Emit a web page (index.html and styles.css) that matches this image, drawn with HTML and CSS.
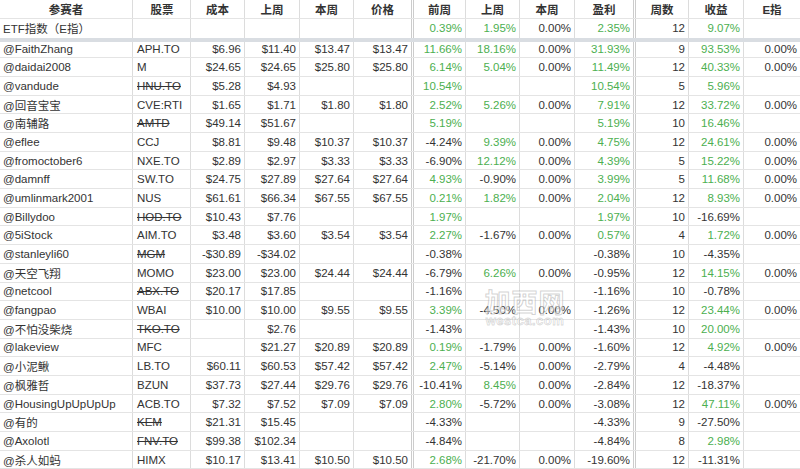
FILE: index.html
```html
<!DOCTYPE html>
<html lang="zh">
<head>
<meta charset="utf-8">
<title>股票比赛</title>
<link rel="stylesheet" href="styles.css">
</head>
<body>
<div class="sheet">
  <div class="row head">
    <span class="c">参赛者</span><span class="c">股票</span><span class="c">成本</span><span class="c">上周</span><span class="c">本周</span><span class="c">价格</span><span class="c">前周</span><span class="c">上周</span><span class="c">本周</span><span class="c">盈利</span><span class="c">周数</span><span class="c">收益</span><span class="c">E指</span>
  </div>
  <div class="row etf">
    <span class="c">ETF指数（E指）</span><span class="c"></span><span class="c"></span><span class="c"></span><span class="c"></span><span class="c"></span><span class="c g">0.39%</span><span class="c g">1.95%</span><span class="c">0.00%</span><span class="c g">2.35%</span><span class="c">12</span><span class="c g">9.07%</span><span class="c"></span>
  </div>
  <div class="row first">
    <span class="c">@FaithZhang</span><span class="c">APH.TO</span><span class="c">$6.96</span><span class="c">$11.40</span><span class="c">$13.47</span><span class="c">$13.47</span><span class="c g">11.66%</span><span class="c g">18.16%</span><span class="c">0.00%</span><span class="c g">31.93%</span><span class="c">9</span><span class="c g">93.53%</span><span class="c">0.00%</span>
  </div>
  <div class="row">
    <span class="c">@daidai2008</span><span class="c">M</span><span class="c">$24.65</span><span class="c">$24.65</span><span class="c">$25.80</span><span class="c">$25.80</span><span class="c g">6.14%</span><span class="c g">5.04%</span><span class="c">0.00%</span><span class="c g">11.49%</span><span class="c">12</span><span class="c g">40.33%</span><span class="c">0.00%</span>
  </div>
  <div class="row">
    <span class="c">@vandude</span><span class="c"><s>HNU.TO</s></span><span class="c">$5.28</span><span class="c">$4.93</span><span class="c"></span><span class="c"></span><span class="c g">10.54%</span><span class="c"></span><span class="c"></span><span class="c g">10.54%</span><span class="c">5</span><span class="c g">5.96%</span><span class="c"></span>
  </div>
  <div class="row">
    <span class="c">@回音宝宝</span><span class="c">CVE:RTI</span><span class="c">$1.65</span><span class="c">$1.71</span><span class="c">$1.80</span><span class="c">$1.80</span><span class="c g">2.52%</span><span class="c g">5.26%</span><span class="c">0.00%</span><span class="c g">7.91%</span><span class="c">12</span><span class="c g">33.72%</span><span class="c">0.00%</span>
  </div>
  <div class="row">
    <span class="c">@南辅路</span><span class="c"><s>AMTD</s></span><span class="c">$49.14</span><span class="c">$51.67</span><span class="c"></span><span class="c"></span><span class="c g">5.19%</span><span class="c"></span><span class="c"></span><span class="c g">5.19%</span><span class="c">10</span><span class="c g">16.46%</span><span class="c"></span>
  </div>
  <div class="row">
    <span class="c">@eflee</span><span class="c">CCJ</span><span class="c">$8.81</span><span class="c">$9.48</span><span class="c">$10.37</span><span class="c">$10.37</span><span class="c">-4.24%</span><span class="c g">9.39%</span><span class="c">0.00%</span><span class="c g">4.75%</span><span class="c">12</span><span class="c g">24.61%</span><span class="c">0.00%</span>
  </div>
  <div class="row">
    <span class="c">@fromoctober6</span><span class="c">NXE.TO</span><span class="c">$2.89</span><span class="c">$2.97</span><span class="c">$3.33</span><span class="c">$3.33</span><span class="c">-6.90%</span><span class="c g">12.12%</span><span class="c">0.00%</span><span class="c g">4.39%</span><span class="c">5</span><span class="c g">15.22%</span><span class="c">0.00%</span>
  </div>
  <div class="row">
    <span class="c">@damnff</span><span class="c">SW.TO</span><span class="c">$24.75</span><span class="c">$27.89</span><span class="c">$27.64</span><span class="c">$27.64</span><span class="c g">4.93%</span><span class="c">-0.90%</span><span class="c">0.00%</span><span class="c g">3.99%</span><span class="c">5</span><span class="c g">11.68%</span><span class="c">0.00%</span>
  </div>
  <div class="row">
    <span class="c">@umlinmark2001</span><span class="c">NUS</span><span class="c">$61.61</span><span class="c">$66.34</span><span class="c">$67.55</span><span class="c">$67.55</span><span class="c g">0.21%</span><span class="c g">1.82%</span><span class="c">0.00%</span><span class="c g">2.04%</span><span class="c">12</span><span class="c g">8.93%</span><span class="c">0.00%</span>
  </div>
  <div class="row">
    <span class="c">@Billydoo</span><span class="c"><s>HOD.TO</s></span><span class="c">$10.43</span><span class="c">$7.76</span><span class="c"></span><span class="c"></span><span class="c g">1.97%</span><span class="c"></span><span class="c"></span><span class="c g">1.97%</span><span class="c">10</span><span class="c">-16.69%</span><span class="c"></span>
  </div>
  <div class="row">
    <span class="c">@5iStock</span><span class="c">AIM.TO</span><span class="c">$3.48</span><span class="c">$3.60</span><span class="c">$3.54</span><span class="c">$3.54</span><span class="c g">2.27%</span><span class="c">-1.67%</span><span class="c">0.00%</span><span class="c g">0.57%</span><span class="c">4</span><span class="c g">1.72%</span><span class="c">0.00%</span>
  </div>
  <div class="row">
    <span class="c">@stanleyli60</span><span class="c"><s>MGM</s></span><span class="c">-$30.89</span><span class="c">-$34.02</span><span class="c"></span><span class="c"></span><span class="c">-0.38%</span><span class="c"></span><span class="c"></span><span class="c">-0.38%</span><span class="c">10</span><span class="c">-4.35%</span><span class="c"></span>
  </div>
  <div class="row">
    <span class="c">@天空飞翔</span><span class="c">MOMO</span><span class="c">$23.00</span><span class="c">$23.00</span><span class="c">$24.44</span><span class="c">$24.44</span><span class="c">-6.79%</span><span class="c g">6.26%</span><span class="c">0.00%</span><span class="c">-0.95%</span><span class="c">12</span><span class="c g">14.15%</span><span class="c">0.00%</span>
  </div>
  <div class="row">
    <span class="c">@netcool</span><span class="c"><s>ABX.TO</s></span><span class="c">$20.17</span><span class="c">$17.85</span><span class="c"></span><span class="c"></span><span class="c">-1.16%</span><span class="c"></span><span class="c"></span><span class="c">-1.16%</span><span class="c">10</span><span class="c">-0.78%</span><span class="c"></span>
  </div>
  <div class="row">
    <span class="c">@fangpao</span><span class="c">WBAI</span><span class="c">$10.00</span><span class="c">$10.00</span><span class="c">$9.55</span><span class="c">$9.55</span><span class="c g">3.39%</span><span class="c">-4.50%</span><span class="c">0.00%</span><span class="c">-1.26%</span><span class="c">12</span><span class="c g">23.44%</span><span class="c">0.00%</span>
  </div>
  <div class="row">
    <span class="c">@不怕没柴烧</span><span class="c"><s>TKO.TO</s></span><span class="c"></span><span class="c">$2.76</span><span class="c"></span><span class="c"></span><span class="c">-1.43%</span><span class="c"></span><span class="c"></span><span class="c">-1.43%</span><span class="c">10</span><span class="c g">20.00%</span><span class="c"></span>
  </div>
  <div class="row">
    <span class="c">@lakeview</span><span class="c">MFC</span><span class="c"></span><span class="c">$21.27</span><span class="c">$20.89</span><span class="c">$20.89</span><span class="c g">0.19%</span><span class="c">-1.79%</span><span class="c">0.00%</span><span class="c">-1.60%</span><span class="c">12</span><span class="c g">4.92%</span><span class="c">0.00%</span>
  </div>
  <div class="row">
    <span class="c">@小泥鳅</span><span class="c">LB.TO</span><span class="c">$60.11</span><span class="c">$60.53</span><span class="c">$57.42</span><span class="c">$57.42</span><span class="c g">2.47%</span><span class="c">-5.14%</span><span class="c">0.00%</span><span class="c">-2.79%</span><span class="c">4</span><span class="c">-4.48%</span><span class="c"></span>
  </div>
  <div class="row">
    <span class="c">@枫雅哲</span><span class="c">BZUN</span><span class="c">$37.73</span><span class="c">$27.44</span><span class="c">$29.76</span><span class="c">$29.76</span><span class="c">-10.41%</span><span class="c g">8.45%</span><span class="c">0.00%</span><span class="c">-2.84%</span><span class="c">12</span><span class="c">-18.37%</span><span class="c"></span>
  </div>
  <div class="row">
    <span class="c">@HousingUpUpUpUp</span><span class="c">ACB.TO</span><span class="c">$7.32</span><span class="c">$7.52</span><span class="c">$7.09</span><span class="c">$7.09</span><span class="c g">2.80%</span><span class="c">-5.72%</span><span class="c">0.00%</span><span class="c">-3.08%</span><span class="c">12</span><span class="c g">47.11%</span><span class="c">0.00%</span>
  </div>
  <div class="row">
    <span class="c">@有的</span><span class="c"><s>KEM</s></span><span class="c">$21.31</span><span class="c">$15.45</span><span class="c"></span><span class="c"></span><span class="c">-4.33%</span><span class="c"></span><span class="c"></span><span class="c">-4.33%</span><span class="c">9</span><span class="c">-27.50%</span><span class="c"></span>
  </div>
  <div class="row">
    <span class="c">@Axolotl</span><span class="c"><s>FNV.TO</s></span><span class="c">$99.38</span><span class="c">$102.34</span><span class="c"></span><span class="c"></span><span class="c">-4.84%</span><span class="c"></span><span class="c"></span><span class="c">-4.84%</span><span class="c">8</span><span class="c g">2.98%</span><span class="c"></span>
  </div>
  <div class="row">
    <span class="c">@杀人如蚂</span><span class="c">HIMX</span><span class="c">$10.17</span><span class="c">$13.41</span><span class="c">$10.50</span><span class="c">$10.50</span><span class="c g">2.68%</span><span class="c">-21.70%</span><span class="c">0.00%</span><span class="c">-19.60%</span><span class="c">12</span><span class="c">-11.31%</span><span class="c"></span>
  </div>

  <div class="wm">
    <div class="wm-cn">加西网</div>
    <div class="wm-en">westca.com</div>
  </div>
</div>
</body>
</html>
```
FILE: styles.css
```css
* {
  box-sizing: border-box;
}

html, body {
  margin: 0;
  padding: 0;
  background: #ffffff;
}

body {
  font-family: "Liberation Sans", Arial, "Noto Sans CJK SC", sans-serif;
  font-size: 11.5px;
  color: #333333;
}

.sheet {
  position: relative;
  width: 800px;
  overflow: hidden;
}

.row {
  display: grid;
  grid-template-columns: 133px 58px 54px 55px 54px 57px 55px 54px 55px 58px 56px 55px 56px;
  height: 18.69px;
  border-bottom: 1px solid #e4e4e4;
}

.c {
  display: flex;
  align-items: center;
  justify-content: flex-end;
  padding: 0 3px;
  border-right: 1px solid #dcdcdc;
  white-space: nowrap;
  overflow: hidden;
}

.c:nth-child(1),
.c:nth-child(2) {
  justify-content: flex-start;
}

.c:nth-child(1) {
  padding-left: 3px;
}

.c:nth-child(2) {
  padding-left: 4px;
}

.c:nth-child(6),
.c:nth-child(10) {
  border-right: none;
}

.c:nth-child(7),
.c:nth-child(11) {
  border-left: 3px double #cccccc;
}

.c:nth-child(13) {
  border-right: none;
}

.head {
  height: 18.7px;
}

.head .c {
  justify-content: center;
  font-weight: bold;
  color: #333333;
}

.etf {
  height: 23px;
  border-bottom: 4.4px solid #d9dde2;
}

.first {
  height: 16.6px;
}

.g {
  color: #4caf50;
}

s {
  text-decoration: line-through;
}

.wm {
  position: absolute;
  left: 482px;
  top: 287px;
  width: 86px;
  text-align: center;
  pointer-events: none;
}

.wm-cn {
  font-family: "Noto Sans CJK SC", sans-serif;
  font-size: 26px;
  font-weight: bold;
  line-height: 28px;
  letter-spacing: 1px;
  color: rgba(255, 255, 255, 0.55);
  -webkit-text-stroke: 1px rgba(130, 130, 130, 0.35);
}

.wm-en {
  font-family: "Liberation Sans", sans-serif;
  font-size: 13px;
  font-weight: bold;
  line-height: 12px;
  letter-spacing: 0.5px;
  color: rgba(255, 255, 255, 0.55);
  -webkit-text-stroke: 0.8px rgba(130, 130, 130, 0.3);
}
```
